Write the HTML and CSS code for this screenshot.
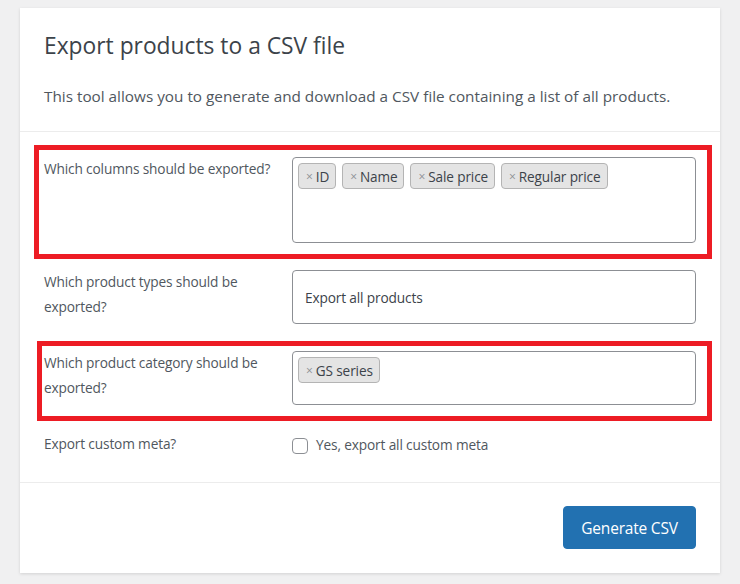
FILE: index.html
```html
<!DOCTYPE html>
<html lang="en">
<head>
<meta charset="utf-8">
<title>Export products</title>
<link rel="stylesheet" href="styles.css">
</head>
<body>
<div class="card">
  <header class="card-head">
    <h2 class="title">Export products to a CSV file</h2>
    <p class="desc">This tool allows you to generate and download a CSV file containing a list of all products.</p>
  </header>
  <section class="form">
    <div class="row">
      <div class="label">Which columns should be exported?</div>
      <div class="field field-tall">
        <span class="tag"><span class="x">×</span>ID</span>
        <span class="tag"><span class="x">×</span>Name</span>
        <span class="tag"><span class="x">×</span>Sale price</span>
        <span class="tag"><span class="x">×</span>Regular price</span>
      </div>
      <div class="mark mark-1"></div>
    </div>
    <div class="row">
      <div class="label">Which product types should be exported?</div>
      <div class="field field-select">Export all products</div>
    </div>
    <div class="row">
      <div class="label">Which product category should be exported?</div>
      <div class="field field-mid">
        <span class="tag"><span class="x">×</span>GS series</span>
      </div>
      <div class="mark mark-2"></div>
    </div>
    <div class="row row-check">
      <div class="label">Export custom meta?</div>
      <label class="check"><span class="box"></span>Yes, export all custom meta</label>
    </div>
  </section>
  <footer class="card-foot">
    <button class="btn">Generate CSV</button>
  </footer>
</div>
</body>
</html>
```

FILE: styles.css
```css
* { box-sizing: border-box; }
html, body { margin: 0; padding: 0; }
body {
  background: #f0f0f1;
  font-family: "Open Sans", "Noto Sans", sans-serif;
  color: #50575e;
  width: 740px;
  height: 584px;
  overflow: hidden;
}
.card {
  margin: 8px 20px 0;
  width: 700px;
  height: 565px;
  background: #fff;
  box-shadow: 0 1px 3px rgba(0,0,0,0.13);
  display: flex;
  flex-direction: column;
}
.card-head {
  padding: 23px 24px 23px;
  border-bottom: 1px solid #ececec;
}
.title {
  margin: 0;
  font-size: 22.8px;
  line-height: 30px;
  font-weight: 400;
  color: #3c434a;
}
.desc {
  margin: 23px 0 0;
  font-size: 15.3px;
  line-height: 24px;
  color: #50575e;
}
.form {
  padding: 25px 24px 26px;
  display: flex;
  flex-direction: column;
  gap: 27px;
  border-bottom: 1px solid #ececec;
}
.row {
  position: relative;
  display: grid;
  grid-template-columns: 248px 404px;
}
.label {
  font-size: 13.7px;
  line-height: 24.5px;
  color: #50575e;
  padding-right: 4px;
  letter-spacing: -0.15px;
}
.field {
  border: 1px solid #8c8f94;
  border-radius: 4px;
  background: #fff;
  padding: 5px;
  display: flex;
  flex-wrap: wrap;
  align-items: flex-start;
  align-content: flex-start;
  gap: 6px;
}
.field-tall { height: 86px; }
.field-mid { height: 54px; }
.field-select {
  height: 54px;
  padding: 0 12px;
  align-items: center;
  align-content: center;
  font-size: 13.7px;
  color: #3c434a;
  letter-spacing: -0.15px;
}
.tag {
  height: 26px;
  display: inline-flex;
  align-items: center;
  padding: 0 6px 0 7px;
  background: #e4e4e4;
  border: 1px solid #b4b4b4;
  border-radius: 4px;
  font-size: 13.6px;
  color: #3c434a;
  letter-spacing: -0.12px;
}
.x {
  color: #8c8f94;
  font-size: 12px;
  margin-right: 3px;
}
.row-check .label { line-height: 24px; }
.check {
  display: flex;
  align-items: center;
  height: 24px;
  font-size: 13.7px;
  color: #50575e;
  letter-spacing: -0.15px;
}
.box {
  width: 16px;
  height: 16px;
  border: 1px solid #8c8f94;
  border-radius: 4px;
  margin-right: 8px;
  margin-top: 3px;
  background: #fff;
}
.mark {
  position: absolute;
  border: 5px solid #ed1c24;
  pointer-events: none;
}
.mark-1 { left: -10px; right: -16px; top: -12px; bottom: -16px; }
.mark-2 { left: -7px; right: -16px; top: -10px; bottom: -16px; }
.card-foot {
  flex: 1;
  display: flex;
  justify-content: flex-end;
  align-items: flex-start;
  padding: 23px 24px;
}
.btn {
  width: 133px;
  height: 43px;
  background: #2271b1;
  border: 1px solid #2271b1;
  border-radius: 4px;
  color: #fff;
  font-family: "Open Sans", "Noto Sans", sans-serif;
  font-size: 15.5px;
  letter-spacing: -0.2px;
  padding: 0;
}
```
